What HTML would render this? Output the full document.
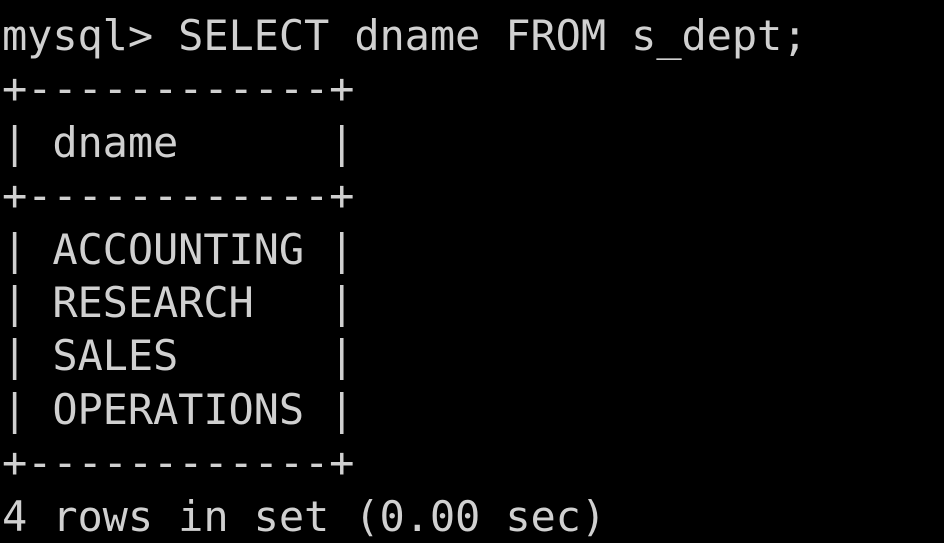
<!DOCTYPE html>
<html><head><meta charset="utf-8"><style>
html,body{margin:0;padding:0;background:#000;width:944px;height:540px;overflow:hidden}
pre{margin:0;position:absolute;left:2px;top:9px;font-family:"DejaVu Sans Mono","Liberation Mono",monospace;font-size:42px;line-height:53.4px;color:#d0d0d0;letter-spacing:-0.12px}
</style></head><body><pre>mysql&gt; SELECT dname FROM s_dept;
+------------+
| dname      |
+------------+
| ACCOUNTING |
| RESEARCH   |
| SALES      |
| OPERATIONS |
+------------+
4 rows in set (0.00 sec)</pre></body></html>
